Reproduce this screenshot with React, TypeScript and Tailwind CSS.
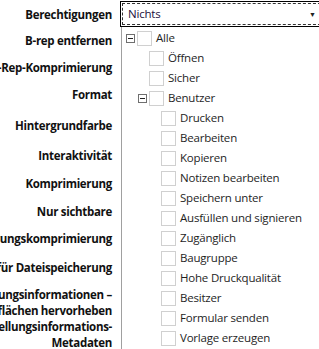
import React from "react"

const labels: { text: string[]; h: number }[] = [
  { text: ["Berechtigungen"], h: 30 },
  { text: ["B-rep entfernen"], h: 22 },
  { text: ["B-Rep-Komprimierung"], h: 32 },
  { text: ["Format"], h: 22 },
  { text: ["Hintergrundfarbe"], h: 40 },
  { text: ["Interaktivität"], h: 20 },
  { text: ["Komprimierung"], h: 36 },
  { text: ["Nur sichtbare"], h: 20 },
  { text: ["Tessellierungskomprimierung"], h: 34 },
  { text: ["Optimieren für Dateispeicherung"], h: 24 },
  { text: ["Darstellungsinformationen –", "Schnittflächen hervorheben"], h: 45 },
  { text: ["Darstellungsinformations-", "Metadaten"], h: 20 },
]

type Node = { label: string; level: number; expander?: boolean }

const tree: Node[] = [
  { label: "Alle", level: 0, expander: true },
  { label: "Öffnen", level: 1 },
  { label: "Sicher", level: 1 },
  { label: "Benutzer", level: 1, expander: true },
  { label: "Drucken", level: 2 },
  { label: "Bearbeiten", level: 2 },
  { label: "Kopieren", level: 2 },
  { label: "Notizen bearbeiten", level: 2 },
  { label: "Speichern unter", level: 2 },
  { label: "Ausfüllen und signieren", level: 2 },
  { label: "Zugänglich", level: 2 },
  { label: "Baugruppe", level: 2 },
  { label: "Hohe Druckqualität", level: 2 },
  { label: "Besitzer", level: 2 },
  { label: "Formular senden", level: 2 },
  { label: "Vorlage erzeugen", level: 2 },
]

const Expander = () => (
  <svg width="9" height="9" viewBox="0 0 9 9" className="shrink-0">
    <rect x="0.5" y="0.5" width="8" height="8" fill="white" stroke="#6f6f6f" />
    <line x1="2" y1="4.5" x2="7" y2="4.5" stroke="#222" />
  </svg>
)

const TreeRow = ({ node }: { node: Node }) => {
  const pad = node.level === 0 ? "pl-[4px]" : node.level === 1 ? "pl-[16px]" : "pl-[28px]"
  return (
    <div className={`flex h-[20px] items-center ${pad}`}>
      {node.expander ? <Expander /> : <div className="w-[9px] shrink-0" />}
      <div className="ml-[2px] h-[15px] w-[15px] shrink-0 border border-[#d0d0d0] bg-white" />
      <span className="ml-[4px] whitespace-nowrap text-[11.5px] tracking-[-0.2px] text-[#1e1e1e]">
        {node.label}
      </span>
    </div>
  )
}

const App = () => {
  return (
    <div
      className="flex h-[349px] w-[319px] overflow-hidden bg-white"
      style={{ fontFamily: '"Open Sans", "Noto Sans", sans-serif' }}
    >
      <div className="flex w-[120px] shrink-0 flex-col pr-[8px]">
        {labels.map((l, i) => (
          <div
            key={i}
            className="flex shrink-0 flex-col items-end justify-center"
            style={{ height: l.h }}
          >
            {l.text.map((t, j) => (
              <span
                key={j}
                className="whitespace-nowrap text-[11.5px] font-bold leading-[16px] tracking-[-0.3px] text-[#111]"
              >
                {t}
              </span>
            ))}
          </div>
        ))}
      </div>

      <div className="flex w-[203px] shrink-0 flex-col">
        <div className="mt-[1px] h-[26px] shrink-0 border border-black bg-white p-[1px]">
          <div className="flex h-full items-center border border-dashed border-[#333] pl-[5px] pr-[4px]">
            <span className="grow text-[11.5px] tracking-[-0.2px] text-[#1a1040]">Nichts</span>
            <span className="text-[7px] leading-none text-[#222]">▼</span>
          </div>
        </div>
        <div className="ml-[1px] grow border-l border-[#a0a0a0] pt-[1px]">
          {tree.map((n, i) => (
            <TreeRow key={i} node={n} />
          ))}
        </div>
      </div>
    </div>
  )
}

export default App
